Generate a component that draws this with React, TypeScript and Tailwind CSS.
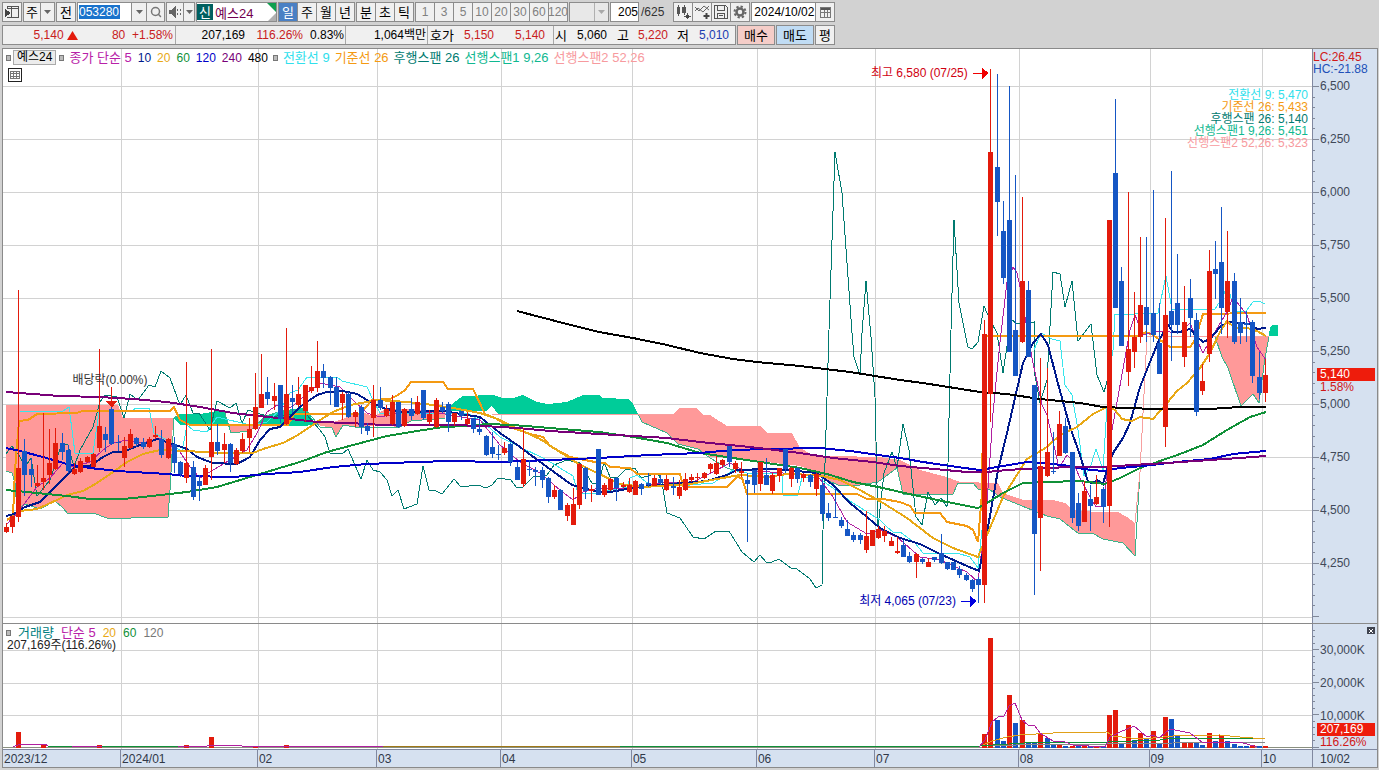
import type { ReactNode } from "react";
import { Search } from "lucide-react";

type Candle = [x: number, high: number, top: number, bottom: number, low: number, up: 0 | 1];
type Bar = [x: number, height: number, up: 0 | 1];

const RED = "#e31b0c";
const BLUE = "#1556c4";

// Plot coordinates: 53 units per 250 won, 6,500 sits on y = 86.
const candles: Candle[] = [
	[6, 523, 527, 532, 533, 1], [12, 516, 516, 527, 533, 1], [18, 290, 468, 517, 522, 1], [24, 439, 451, 475, 496, 0],
	[31, 458, 469, 475, 487, 0], [37, 465, 483, 486, 487, 1], [43, 413, 478, 482, 490, 1], [49, 429, 463, 475, 484, 1],
	[55, 428, 443, 469, 470, 1], [62, 433, 443, 452, 460, 0], [68, 445, 450, 471, 473, 0], [74, 463, 469, 474, 475, 1],
	[80, 458, 461, 472, 473, 1], [87, 456, 457, 462, 463, 1], [93, 453, 454, 467, 467, 1], [99, 349, 426, 448, 452, 1],
	[105, 427, 434, 440, 452, 0], [111, 407, 409, 444, 445, 0], [118, 435, 442, 443, 451, 0], [124, 437, 446, 458, 467, 1],
	[130, 429, 434, 448, 449, 1], [136, 437, 438, 444, 447, 0], [143, 438, 442, 447, 449, 0], [149, 437, 439, 447, 448, 1],
	[155, 426, 435, 437, 439, 1], [161, 430, 439, 455, 458, 0], [168, 438, 439, 458, 459, 1], [174, 437, 444, 463, 473, 0],
	[180, 461, 462, 474, 477, 0], [186, 362, 463, 478, 483, 1], [193, 461, 467, 497, 500, 0], [199, 475, 481, 486, 501, 0],
	[205, 465, 468, 485, 485, 1], [211, 349, 442, 457, 480, 1], [217, 424, 442, 451, 455, 0], [224, 433, 444, 450, 463, 1],
	[230, 443, 444, 463, 472, 0], [236, 448, 450, 464, 465, 1], [242, 433, 439, 451, 453, 1], [249, 418, 429, 438, 452, 1],
	[255, 373, 407, 429, 430, 1], [261, 354, 394, 408, 408, 1], [267, 377, 392, 399, 405, 0], [274, 383, 396, 401, 410, 1],
	[280, 385, 385, 419, 423, 0], [286, 328, 394, 424, 425, 1], [292, 385, 398, 402, 413, 0], [298, 377, 394, 405, 407, 1],
	[305, 385, 385, 411, 422, 1], [311, 366, 387, 391, 393, 1], [317, 341, 371, 388, 392, 1], [323, 364, 371, 378, 388, 0],
	[330, 376, 377, 388, 405, 0], [336, 377, 387, 407, 407, 0], [342, 392, 394, 403, 420, 1], [348, 392, 394, 417, 418, 0],
	[355, 410, 412, 417, 427, 1], [361, 405, 407, 427, 434, 0], [367, 423, 426, 431, 435, 0], [373, 385, 400, 418, 437, 1],
	[380, 387, 400, 408, 410, 0], [386, 405, 409, 416, 417, 1], [392, 395, 402, 424, 425, 1], [398, 402, 402, 427, 428, 0],
	[404, 408, 409, 426, 427, 1], [411, 398, 409, 416, 420, 0], [417, 396, 402, 414, 415, 1], [423, 390, 390, 418, 420, 0],
	[429, 410, 414, 422, 425, 1], [436, 398, 400, 427, 428, 1], [442, 402, 407, 411, 413, 0], [448, 402, 404, 422, 432, 0],
	[454, 413, 413, 422, 426, 1], [461, 411, 411, 416, 420, 0], [467, 412, 419, 424, 425, 1], [473, 418, 418, 429, 433, 0],
	[479, 418, 429, 432, 435, 0], [486, 435, 436, 455, 456, 0], [492, 432, 447, 454, 458, 0], [498, 445, 454, 455, 460, 0],
	[504, 442, 448, 453, 455, 1], [510, 443, 444, 462, 466, 0], [517, 462, 467, 480, 480, 0], [523, 428, 459, 484, 487, 1],
	[529, 460, 469, 470, 476, 0], [535, 467, 470, 472, 486, 0], [542, 467, 470, 480, 488, 0], [548, 477, 478, 497, 503, 0],
	[554, 485, 490, 497, 499, 1], [560, 489, 490, 510, 510, 0], [567, 503, 505, 516, 521, 1], [573, 488, 504, 525, 525, 1],
	[579, 463, 464, 505, 509, 1], [585, 467, 468, 491, 499, 0], [591, 485, 489, 491, 502, 1], [598, 449, 449, 495, 495, 0],
	[604, 483, 485, 495, 497, 1], [610, 478, 479, 490, 491, 1], [616, 477, 478, 488, 501, 0], [623, 482, 485, 487, 488, 1],
	[629, 478, 485, 492, 493, 1], [635, 480, 481, 495, 495, 1], [641, 483, 484, 489, 495, 0], [648, 473, 483, 485, 487, 0],
	[654, 475, 478, 486, 486, 1], [660, 475, 479, 483, 485, 0], [666, 475, 479, 490, 491, 1], [673, 477, 486, 488, 495, 0],
	[679, 480, 487, 496, 499, 1], [685, 473, 479, 490, 491, 1], [691, 474, 477, 480, 482, 1], [697, 473, 477, 478, 481, 1],
	[704, 472, 473, 478, 479, 1], [710, 463, 464, 469, 473, 1], [716, 456, 463, 474, 475, 1], [722, 459, 460, 465, 467, 1],
	[729, 446, 446, 462, 467, 0], [735, 461, 463, 469, 473, 1], [741, 462, 471, 473, 477, 1], [747, 473, 480, 484, 542, 0],
	[754, 470, 470, 485, 493, 0], [760, 462, 462, 484, 491, 1], [766, 458, 475, 485, 485, 0], [772, 473, 475, 491, 494, 1],
	[779, 468, 468, 476, 482, 1], [785, 449, 449, 469, 473, 0], [791, 467, 468, 479, 487, 1], [797, 467, 468, 479, 483, 0],
	[803, 473, 474, 478, 482, 1], [810, 474, 475, 482, 487, 0], [816, 473, 474, 489, 496, 1], [822, 477, 485, 514, 521, 0],
	[828, 503, 513, 518, 521, 0], [835, 488, 517, 518, 518, 0], [841, 517, 520, 526, 528, 0], [847, 520, 529, 536, 536, 0],
	[853, 532, 535, 540, 542, 0], [860, 533, 535, 540, 544, 0], [866, 511, 536, 550, 553, 1], [872, 530, 530, 546, 546, 1],
	[878, 526, 529, 538, 539, 1], [884, 526, 531, 536, 542, 1], [891, 537, 541, 546, 546, 1], [897, 537, 551, 553, 554, 1],
	[903, 540, 545, 557, 557, 0], [909, 552, 556, 562, 563, 0], [916, 553, 554, 562, 578, 1], [922, 558, 559, 562, 564, 0],
	[928, 558, 562, 567, 567, 1], [934, 557, 557, 560, 562, 0], [941, 534, 553, 563, 564, 0], [947, 562, 562, 569, 570, 0],
	[953, 562, 562, 570, 570, 0], [959, 566, 569, 575, 578, 0], [966, 573, 575, 580, 581, 0], [972, 579, 580, 589, 592, 0],
	[978, 577, 579, 585, 603, 0], [984, 320, 334, 585, 603, 1], [990, 69, 152, 394, 422, 1], [997, 74, 167, 202, 236, 0],
	[1003, 201, 231, 278, 284, 0], [1009, 86, 220, 352, 352, 0], [1015, 175, 330, 376, 376, 0], [1022, 197, 281, 342, 343, 1],
	[1028, 281, 290, 357, 357, 0], [1034, 385, 385, 534, 595, 0], [1040, 358, 466, 518, 571, 1], [1047, 368, 452, 476, 477, 1],
	[1053, 432, 471, 472, 474, 0], [1059, 411, 424, 456, 456, 1], [1065, 418, 426, 453, 454, 0], [1072, 452, 452, 518, 523, 0],
	[1078, 493, 503, 526, 531, 0], [1084, 481, 491, 522, 522, 1], [1090, 485, 499, 506, 531, 0], [1096, 475, 497, 504, 505, 1],
	[1103, 487, 489, 507, 523, 0], [1109, 220, 220, 506, 527, 1], [1115, 99, 173, 308, 308, 0], [1121, 267, 281, 346, 346, 0],
	[1128, 192, 349, 372, 386, 1], [1134, 292, 337, 352, 368, 1], [1140, 237, 305, 337, 343, 1], [1146, 237, 307, 325, 342, 0],
	[1153, 190, 313, 335, 342, 0], [1159, 303, 343, 374, 374, 0], [1165, 218, 315, 427, 447, 1], [1171, 171, 311, 325, 361, 0],
	[1177, 254, 303, 325, 334, 0], [1184, 286, 322, 357, 367, 1], [1190, 279, 298, 318, 337, 0], [1196, 313, 320, 412, 416, 0],
	[1202, 364, 381, 391, 395, 1], [1209, 250, 271, 354, 362, 1], [1215, 241, 269, 274, 299, 0], [1221, 207, 262, 308, 334, 0],
	[1227, 231, 281, 312, 338, 1], [1234, 273, 281, 342, 344, 0], [1240, 298, 322, 333, 344, 0], [1246, 311, 323, 325, 342, 0],
	[1252, 320, 322, 376, 383, 0], [1259, 352, 377, 393, 399, 0], [1265, 359, 375, 393, 402, 1],
];

const volumes: Bar[] = [
	[18, 15, 1], [43, 3, 1], [99, 2, 1], [186, 2, 1], [211, 10, 1], [255, 1, 1], [286, 2, 1],
	[984, 13, 1], [990, 109, 1], [997, 27, 0], [1003, 6, 0], [1009, 52, 1], [1015, 24, 0], [1022, 27, 1], [1028, 4, 0],
	[1034, 4, 0], [1040, 13, 1], [1047, 9, 0], [1053, 2, 0], [1059, 2, 1], [1065, 1, 0], [1072, 1, 1], [1078, 2, 0],
	[1084, 1, 1], [1090, 1, 0], [1096, 1, 1], [1103, 1, 0], [1109, 32, 1], [1115, 37, 1], [1121, 4, 0], [1128, 22, 1],
	[1134, 7, 0], [1140, 14, 1], [1146, 8, 0], [1153, 16, 1], [1159, 4, 0], [1165, 30, 1], [1171, 28, 0], [1177, 11, 0],
	[1184, 4, 1], [1190, 4, 1], [1196, 4, 0], [1202, 2, 0], [1209, 14, 1], [1215, 6, 0], [1221, 12, 1], [1227, 6, 0],
	[1234, 3, 0], [1240, 1, 0], [1246, 1, 0], [1252, 2, 1], [1259, 1, 0], [1265, 1, 1],
];

const clouds = [
	{ fill: "#ff9999", points: "6,405 118,405 123,418 173,418 170,490 168,517 163,518 140,517 123,519 107,518 93,513 68,514 63,508 55,501 40,509 25,504 17,510 15,483 12,473 6,471" },
	{ fill: "#00cc99", points: "174,418 180,414 200,414 224,410 229,425 180,425" },
	{ fill: "#ff9999", points: "229,425 231,433 250,431 256,425" },
	{ fill: "#00cc99", points: "258,425 266,416 285,410 303,408 308,412 316,425 300,426" },
	{ fill: "#ff9999", points: "313,424 333,422 345,418 360,412 375,416 385,409 445,410 445,418 425,420 411,421 400,427 375,425 361,428 343,425 336,437 332,428" },
	{ fill: "#00cc99", points: "445,411 453,403 463,396 493,395 502,398 513,398 523,395 537,402 548,404 557,403 567,402 583,395 599,395 603,398 628,399 633,404 638,414 498,414 492,406 486,411" },
	{ fill: "#ff9999", points: "638,414 673,414 680,408 697,408 703,415 710,415 727,426 760,426 767,433 792,433 800,448 813,455 833,456 880,457 900,460 920,470 947,477 960,482 998,483 1003,493 1023,500 1053,500 1065,503 1073,510 1097,512 1118,512 1127,517 1135,523 1135,556 1123,543 1103,539 1092,533 1078,533 1070,527 1060,519 1047,516 1027,508 1000,497 990,490 978,489 973,483 958,483 953,494 903,494 897,468 878,482 860,485 840,486 827,480 817,473 800,466 733,458 710,457 698,449 678,444 667,433 642,422" },
	{ fill: "#ff9999", points: "1215,337 1269,337 1265,358 1259,403 1253,394 1241,406 1228,368 1222,357" },
	{ fill: "#00cc99", points: "1269,336 1270,327 1273,325 1278,325 1278,336" },
];

const priceLines = [
	{ color: "#3cb38a", width: 1, points: "6,471 12,473 15,483 17,510 25,504 40,509 55,501 63,508 68,514 93,513 107,518 123,519 140,517 163,518 168,517 170,490 174,418 180,414" },
	{ color: "#3cb38a", width: 1, points: "224,410 231,433 250,431 256,425 266,416 285,410 308,412 320,427 332,428 336,437 343,425 361,428 400,427 411,421 445,418" },
	{ color: "#3cb38a", width: 1, points: "638,414 642,422 667,433 678,444 698,449 710,458 727,468 740,472" },
	{ color: "#3cb38a", width: 1, points: "817,473 827,480 840,486 860,485 878,482 897,468 903,494 953,494 958,483 973,483 978,489 990,490 1000,497 1027,508 1047,516 1060,519 1070,527 1078,533 1092,533 1103,539 1123,543 1135,556 1140,472" },
	{ color: "#f7a0a0", width: 1, points: "492,414 673,414" },
	{ color: "#f7a0a0", width: 1, points: "1135,523 1140,472 1147,336 1269,336" },
	{ color: "#3cb38a", width: 1, points: "1215,337 1222,357 1228,368 1241,406 1253,394 1259,403 1265,358 1269,337" },
	// lagging span
	{ color: "#007a70", width: 1, points: "6,454 12,446 20,457 25,467 31,458 37,496 50,480 62,443 68,445 74,467 80,450 93,427 100,402 105,395 117,397 124,418 130,394 138,400 149,385 155,387 161,371 170,378 180,405 186,395 193,413 199,413 210,430 217,401 230,408 236,403 242,423 248,410 257,413 270,417 300,413 307,415 320,430 325,437 330,453 342,454 348,449 361,479 367,460 373,470 380,472 387,480 392,496 398,490 404,509 417,504 423,466 429,490 436,491 442,494 454,479 461,487 478,485 486,488 492,485 498,478 511,480 517,488 523,487 533,477 547,475 554,465 567,460 580,463 592,483 599,483 604,462 610,477 617,478 625,470 635,468 641,478 658,473 662,483 667,513 680,518 693,537 704,539 716,531 729,531 742,552 754,562 760,555 766,562 772,562 779,559 791,568 797,569 810,579 816,588 822,585 823,530 829,330 835,152 842,193 852,333 854,357 860,375 862,333 866,281 871,337 875,397 878,527 884,473 892,452 897,468 903,424 909,450 916,517 922,525 928,492 935,505 941,498 947,507 951,330 954,220 959,303 966,338 968,347 972,349 978,342 984,306 990,320 997,333 1003,373 1011,319 1017,324 1034,322 1034,370 1040,403 1047,380 1053,272 1060,274 1065,307 1072,281 1078,341 1091,324 1097,375 1104,392 1108,378" },
	// conversion line
	{ color: "#37e6ec", width: 1, points: "20,411 63,411 69,407 75,453 93,453 99,412 133,411 135,408 149,408 154,433 167,440 182,452 187,425 193,430 207,432 217,417 250,425 267,422 280,410 290,393 298,390 307,377 337,377 342,381 367,387 373,400 380,413 443,413 467,413 483,422 500,437 520,447 547,460 573,476 578,493 597,493 627,487 630,478 637,475 650,485 690,485 713,483 723,477 733,470 747,473 782,474 783,495 798,495 802,477 817,477 833,488 853,503 880,520 887,527 893,532 900,532 915,543 923,553 957,553 970,557 978,568 982,530 984,480 986,336" },
	{ color: "#37e6ec", width: 1, points: "1034,350 1036,345 1041,333 1052,339 1060,341 1065,385 1072,395 1078,430 1084,476 1090,468 1096,449 1103,470 1109,375 1113,350 1115,314 1134,314 1158,313 1166,276 1172,309 1215,309 1222,298 1228,285 1234,311 1246,311 1253,302 1259,301 1265,304" },
	// base line
	{ color: "#f49a12", width: 2, points: "7,520 13,516 15,470 19,421 28,420 37,414 77,413 82,411 170,411 174,407 180,420 190,425 288,425 294,414 360,414 372,400 390,399 398,395 405,390 411,382 443,382 448,389 473,389 485,414 495,418 510,427 530,434 543,437 550,446 570,457 585,460 600,463 605,463 610,467 630,468 637,474 680,474 683,486 690,487 727,487 730,484 737,477 742,478 747,494 857,494 867,499 883,499 900,502 910,506 915,513 940,513 947,522 967,526 973,530 978,542 982,493 984,336 1140,336 1146,332 1153,335 1170,347 1190,347 1195,340 1203,314 1257,313 1266,313" },
	// simple moving averages 5 / 10 / 20 / 60 / 120 / 240 / 480
	{ color: "#b020a0", width: 1, points: "6,525 20,510 27,500 37,487 50,478 63,463 73,467 90,462 103,450 113,443 127,440 143,443 160,438 180,452 190,467 200,478 213,470 230,460 247,450 257,433 267,412 277,405 290,408 300,400 307,393 320,383 340,387 353,400 367,413 380,417 400,413 433,412 480,420 500,445 520,462 540,473 560,490 573,500 583,492 599,488 633,489 660,483 693,482 713,472 730,463 743,470 783,473 817,475 833,497 847,522 867,534 880,530 897,537 920,557 940,560 967,572 978,582 987,503 993,413 1000,342 1007,282 1013,267 1017,273 1020,287 1032,358 1042,405 1047,415 1059,468 1067,455 1072,460 1080,478 1090,497 1096,507 1103,506 1112,430 1130,330 1135,315 1143,335 1160,331 1180,333 1190,323 1197,340 1203,353 1213,335 1227,312 1233,297 1247,315 1257,347 1266,360" },
	{ color: "#001a8c", width: 2, points: "6,516 14,514 25,507 40,502 50,492 67,475 75,467 90,466 103,457 113,452 123,452 137,446 147,443 157,439 167,442 187,449 197,457 213,463 237,464 250,457 260,440 270,429 280,427 290,417 300,407 317,395 327,392 343,391 357,394 367,400 383,408 400,412 443,411 467,415 480,417 500,433 520,447 547,467 572,485 599,492 610,492 633,488 660,485 683,483 707,481 727,475 737,470 767,469 787,470 817,473 833,485 850,503 867,517 880,528 900,538 920,544 940,554 967,566 979,571 987,533 998,470 1007,433 1023,363 1033,343 1041,334 1048,345 1057,380 1070,427 1080,455 1088,482 1093,483 1097,480 1103,484 1106,473 1113,453 1123,438 1130,423 1140,387 1150,362 1159,340 1168,325 1173,332 1180,332 1190,329 1197,337 1203,342 1210,339 1220,327 1228,322 1240,323 1250,324 1257,329 1266,328" },
	{ color: "#e8a815", width: 2, points: "20,511 37,509 57,500 67,495 83,491 97,483 113,472 127,462 143,454 160,450 187,451 217,453 253,453 263,449 283,443 298,435 317,422 333,412 350,405 367,402 377,400 407,402 433,405 453,408 480,413 500,420 520,430 540,439 560,452 577,463 599,474 610,479 620,484 643,487 690,484 717,479 740,475 767,477 787,474 817,475 840,480 860,490 883,503 907,518 933,538 953,548 978,557 987,535 1003,497 1027,459 1047,447 1060,435 1077,427 1093,414 1107,407 1115,410 1122,419 1132,421 1140,417 1153,419 1167,403 1177,391 1187,383 1200,368 1210,353 1220,332 1227,321 1235,328 1247,328 1257,331 1266,336" },
	{ color: "#109038", width: 2, points: "6,490 27,492 67,496 90,499 123,499 143,497 187,492 217,487 250,477 283,467 300,462 327,452 357,444 387,436 417,431 443,427 467,426 487,424 513,425 550,428 599,432 633,437 667,443 700,453 733,458 767,463 800,468 827,474 853,482 883,488 900,492 923,497 957,504 978,508 987,503 1003,493 1023,483 1047,482 1080,481 1105,484 1120,478 1140,468 1160,461 1180,454 1203,445 1227,430 1250,417 1266,412" },
	{ color: "#0000c8", width: 2, points: "6,448 20,451 43,457 67,464 90,468 117,471 167,474 187,476 233,477 267,474 300,472 333,467 367,464 417,462 450,461 500,462 550,460 599,458 650,455 700,453 733,450 767,449 820,448 850,451 900,458 923,462 957,467 980,470 997,467 1027,462 1053,464 1070,466 1083,469 1103,471 1120,468 1143,466 1177,462 1210,459 1233,454 1266,451" },
	{ color: "#780078", width: 2, points: "6,392 33,394 60,396 100,397 133,399 167,402 200,407 233,413 267,417 300,420 317,422 350,423 383,425 450,425 483,426 517,428 550,431 599,434 633,436 667,438 700,442 750,447 800,453 833,458 873,462 900,466 923,468 967,472 987,472 1007,470 1040,468 1080,467 1103,467 1133,465 1167,463 1210,460 1240,458 1266,456" },
	{ color: "#000000", width: 2, points: "517,311 540,317 567,324 599,332 633,338 667,345 700,353 733,359 757,362 800,366 850,372 900,380 923,383 980,392 1007,394 1040,399 1080,403 1103,407 1127,408 1157,409 1210,409 1240,407 1266,407" },
];

const volumeLines = [
	{ color: "#888888", points: "993,746 1040,744 1107,744 1173,743 1265,742" },
	{ color: "#b020a0", points: "13,747 20,744 45,744 48,746 207,746 214,745 238,745 242,746 383,746" },
	{ color: "#109038", points: "48,746 72,746" },
	{ color: "#109038", points: "102,746 178,746" },
	{ color: "#a07818", points: "383,746 620,746" },
	{ color: "#109038", points: "620,746 980,746 993,745 1040,742 1107,742 1160,740 1173,738 1265,738" },
	{ color: "#e0a018", points: "983,745 992,741 1007,737 1020,735 1053,733 1107,732 1113,736 1140,739 1153,738 1173,736 1220,735 1240,737 1265,739" },
	{ color: "#b020a0", points: "979,747 985,740 992,722 998,717 1004,716 1009,706 1015,703 1022,720 1028,725 1035,726 1040,733 1053,741 1065,742 1073,745 1105,747 1110,737 1120,732 1134,726 1147,737 1153,735 1159,738 1170,729 1190,733 1202,742 1220,742 1240,742 1257,747" },
];

const months = [
	{ label: "2023/12", x: 3 },
	{ label: "2024/01", x: 121 },
	{ label: "02", x: 258 },
	{ label: "03", x: 377 },
	{ label: "04", x: 501 },
	{ label: "05", x: 632 },
	{ label: "06", x: 757 },
	{ label: "07", x: 875 },
	{ label: "08", x: 1019 },
	{ label: "09", x: 1150 },
	{ label: "10", x: 1262 },
];
const PLOT_END = 1312;

const priceTicks = ["6,500", "6,250", "6,000", "5,750", "5,500", "5,250", "5,000", "4,750", "4,500", "4,250"];
const minutes = ["1", "3", "5", "10", "20", "30", "60", "120"];

const box = "h-[20px] border border-[#8c8c8c] bg-[#f0f0f0] flex items-center justify-center";

function ToolButton({ children, className = "", label }: { children: ReactNode; className?: string; label?: string }) {
	return (
		<button type="button" aria-label={label} className={`${box} ${className}`}>
			{children}
		</button>
	);
}

function Caret({ color = "#666" }: { color?: string }) {
	return (
		<svg width="7" height="4" viewBox="0 0 7 4">
			<path d="M0 0h7L3.5 4z" fill={color} />
		</svg>
	);
}

function Toolbar() {
	return (
		<div className="flex items-center gap-px pl-[2px] text-[13px]">
			<ToolButton className="w-[20px]" label="패널">
				<svg width="14" height="14" viewBox="0 0 14 14" shapeRendering="crispEdges">
					<path d="M2 1.500h11v11H2zM6.500 1v11M2 3.500h11" fill="none" stroke="#555" />
					<rect x="0" y="4" width="6" height="8" fill="#f0f0f0" />
					<path d="M0 4l6 4-6 4z" fill="#444" />
				</svg>
			</ToolButton>
			<div className="flex -space-x-px">
				<ToolButton className="w-[18px]">주</ToolButton>
				<ToolButton className="w-[15px]" label="주기 선택">
					<Caret />
				</ToolButton>
			</div>
			<ToolButton className="w-[20px]">전</ToolButton>
			<div className="flex -space-x-px">
				<div className="flex h-[20px] w-[55px] items-center border border-[#8c8c8c] bg-white">
					<input
						aria-label="종목코드"
						defaultValue="053280"
						className="ml-px h-[14px] w-[41px] bg-[#1a73cc] text-[12px] text-white outline-none"
					/>
				</div>
				<ToolButton className="w-[16px]" label="종목 목록">
					<Caret />
				</ToolButton>
				<ToolButton className="w-[19px]" label="종목 검색">
					<Search size={12} color="#777" strokeWidth={3} />
				</ToolButton>
			</div>
			<div className="flex -space-x-px">
				<ToolButton className="w-[18px]" label="소리">
					<svg width="13" height="12" viewBox="0 0 13 12" shapeRendering="crispEdges">
						<path d="M0 4h3V8H0zM3 3l4-3v12L3 9z" fill="#666" />
						<path d="M8 3h1v2H8zM8 7h1v2H8zM11 3h1v2h-1zM11 7h1v2h-1z" fill="#666" />
					</svg>
				</ToolButton>
				<ToolButton className="w-[12px]" label="소리 설정">
					<Caret />
				</ToolButton>
			</div>
			<div className="relative flex h-[20px] w-[81px] items-center border border-[#8c8c8c] bg-white">
				<span className="flex h-[16px] w-[16px] items-center justify-center bg-[#006060] text-white">신</span>
				<input aria-label="종목명" defaultValue="예스24" className="ml-[2px] w-[48px] text-[#700050] outline-none" />
				<svg className="absolute right-0 top-0" width="9" height="18" viewBox="0 0 9 18">
					<path d="M0 0h9v9z" fill="#10a050" />
					<path d="M9 10v8H1z" fill="#b0b0b0" />
				</svg>
			</div>
			<div className="flex -space-x-px">
				<button type="button" className="flex h-[20px] w-[20px] items-center justify-center border border-[#8c8c8c] bg-[#4a80c4] text-white">
					일
				</button>
				<ToolButton className="w-[20px]">주</ToolButton>
				<ToolButton className="w-[20px]">월</ToolButton>
				<ToolButton className="w-[20px]">년</ToolButton>
			</div>
			<div className="flex -space-x-px">
				<ToolButton className="w-[20px]">분</ToolButton>
				<ToolButton className="w-[20px]">초</ToolButton>
				<ToolButton className="w-[20px]">틱</ToolButton>
			</div>
			<div className="flex -space-x-px text-[12px] text-[#808080]">
				{minutes.map((m) => (
					<ToolButton key={m} className="w-[20px]">
						{m}
					</ToolButton>
				))}
			</div>
			<div className="relative h-[20px] w-[40px]">
				<select aria-label="분 선택" className="h-[20px] w-full appearance-none border border-[#8c8c8c] bg-[#e8e8e8]" />
				<span className="pointer-events-none absolute right-[1px] top-[1px] flex h-[18px] w-[14px] items-center justify-center border-l border-[#b0b0b0]">
					<Caret color="#a8a8a8" />
				</span>
			</div>
			<label className="flex items-center gap-[2px] text-[12px] text-[#333]">
				<input
					aria-label="표시 개수"
					defaultValue="205"
					className="h-[20px] w-[29px] border border-[#8c8c8c] bg-white text-right text-black outline-none"
				/>
				/625
			</label>
			<div className="ml-[8px] flex -space-x-px">
				<ToolButton className="w-[20px]" label="차트 추가">
					<svg width="15" height="14" viewBox="0 0 15 14" shapeRendering="crispEdges">
						<path d="M1 2h3v7H1zM6 2h4v6H6z" fill="#555" />
						<path d="M2.500 0v11M8.500 0v10M11.500 8v6M8 11.500h7" stroke="#555" />
						<path d="M10 10h3v3h-3z" fill="#444" />
					</svg>
				</ToolButton>
				<ToolButton className="w-[20px]" label="지표 추가">
					<svg width="15" height="14" viewBox="0 0 15 14">
						<path d="M0 2l4 4 5-5 5 4M0 6l3-3 5 4 6-6" fill="none" stroke="#666" />
						<path d="M11.500 8v6M8.500 11h6" stroke="#444" strokeWidth="2" />
					</svg>
				</ToolButton>
				<ToolButton className="w-[20px]" label="저장">
					<svg width="14" height="14" viewBox="0 0 14 14" fill="none" stroke="#555" shapeRendering="crispEdges">
						<path d="M.500 .500h11l2 2v11H.500zM3.500 1v4h7V1M3.500 13V8.500h7V13M5 10.500h4" />
					</svg>
				</ToolButton>
				<ToolButton className="w-[20px]" label="설정">
					<svg width="14" height="14" viewBox="0 0 14 14" fill="none" stroke="#666">
						<circle cx="7" cy="7" r="5.500" strokeWidth="2" strokeDasharray="2.300 2" />
						<circle cx="7" cy="7" r="3.500" strokeWidth="2.500" />
					</svg>
				</ToolButton>
			</div>
			<div className="flex -space-x-px">
				<input
					aria-label="조회일"
					defaultValue="2024/10/02"
					className="h-[20px] w-[65px] border border-[#8c8c8c] bg-white pl-[2px] text-[12px] text-black outline-none"
				/>
				<ToolButton className="w-[20px]" label="달력">
					<svg width="11" height="11" viewBox="0 0 11 11" shapeRendering="crispEdges">
						<path d="M0 0h11v3H0z" fill="#555" />
						<path d="M.500 .500h10v10H.500zM.500 5.500h10M4.500 3v7M7.500 3v7" fill="none" stroke="#777" />
					</svg>
				</ToolButton>
			</div>
		</div>
	);
}

function QuoteBar() {
	const cell = "flex items-center justify-end h-full";
	return (
		<div className="flex items-center gap-px pl-[2px]">
			<div className="flex h-[20px] w-[734px] items-center border border-[#8c8c8c] bg-[#f0f0f0]">
				<div className={`${cell} w-[173px] border-r border-[#a8a8a8] pr-[2px] text-[#c8201c]`}>
					<span className="flex w-[75px] items-center justify-end gap-[3px]">
						5,140
						<svg width="11" height="9" viewBox="0 0 11 9">
							<path d="M5.500 0L11 9H0z" fill={RED} />
						</svg>
					</span>
					<span className="w-[48px] text-right">80</span>
					<span className="w-[48px] text-right">+1.58%</span>
				</div>
				<div className={`${cell} w-[170px] border-r border-[#a8a8a8] pr-[1px]`}>
					<span>207,169</span>
					<span className="w-[58px] text-right text-[#c8201c]">116.26%</span>
					<span className="w-[41px] text-right">0.83%</span>
				</div>
				<div className={`${cell} w-[82px] border-r border-[#a8a8a8] pr-[1px]`}>1,064백만</div>
				<div className={`${cell} w-[126px] border-r border-[#a8a8a8] pr-[8px]`}>
					<span className="text-[13px]">호가</span>
					<span className="w-[40px] text-right text-[#c8201c]">5,150</span>
					<span className="w-[51px] text-right text-[#c8201c]">5,140</span>
				</div>
				<div className={`${cell} w-[181px] pr-[6px]`}>
					<span className="text-[13px]">시</span>
					<span className="w-[40px] text-right">5,060</span>
					<span className="w-[22px] text-right text-[13px]">고</span>
					<span className="w-[39px] text-right text-[#c8201c]">5,220</span>
					<span className="w-[21px] text-right text-[13px]">저</span>
					<span className="w-[40px] text-right text-[#1a3cb0]">5,010</span>
				</div>
			</div>
			<button type="button" className="h-[20px] w-[38px] border border-[#8c8c8c] bg-[#f5cdc8] text-[13px]">
				매수
			</button>
			<button type="button" className="h-[20px] w-[38px] border border-[#8c8c8c] bg-[#c0dcf4] text-[13px]">
				매도
			</button>
			<ToolButton className="w-[20px] text-[13px]">평</ToolButton>
		</div>
	);
}

function Marker() {
	return <span className="h-[6px] w-[5px] border border-[#777] bg-[#bbb]" />;
}

function Line({ points, color, width = 1 }: { points: string; color: string; width?: number }) {
	return <polyline points={points} fill="none" stroke={color} strokeWidth={width} />;
}

function PricePlot() {
	return (
		<svg className="block h-[574px] w-full" viewBox="3 49 1309 574" preserveAspectRatio="none" shapeRendering="crispEdges">
			{[86, 139, 192, 245, 298, 351, 404, 457, 510, 563, 617].map((y) => (
				<rect key={y} x="3" y={y} width="1309" height="1" fill="#d2d2d2" />
			))}
			{months.slice(1).map((m) => (
				<rect key={m.x} x={m.x} y="49" width="1" height="574" fill="#d2d2d2" />
			))}
			{clouds.map((c) => (
				<polygon key={c.points} points={c.points} fill={c.fill} />
			))}
			{priceLines.map((l) => (
				<Line key={l.points} {...l} />
			))}
			{candles.map(([x, high, top, bottom, low, up]) => (
				<g key={x} fill={up ? RED : BLUE}>
					<rect x={x} y={high} width="1" height={low - high} />
					<rect x={x - 2} y={top} width="5" height={bottom - top} />
				</g>
			))}
			<path d="M111 387h1v14h5l-5 7-6-7h5z" fill={RED} />
			<path d="M973 73h9v-5l7 5-7 6v-5h-9z" fill="#f00000" />
			<path d="M961 601h9v-5l7 5-7 6v-5h-9z" fill="#0000e0" />
		</svg>
	);
}

function VolumePlot() {
	return (
		<svg className="block h-[125px] w-full" viewBox="3 624 1309 125" preserveAspectRatio="none" shapeRendering="crispEdges">
			{[650, 683, 715].map((y) => (
				<rect key={y} x="3" y={y} width="1309" height="1" fill="#d2d2d2" />
			))}
			{months.slice(1).map((m) => (
				<rect key={m.x} x={m.x} y="624" width="1" height="125" fill="#d2d2d2" />
			))}
			<rect x="3" y="747" width="1309" height="1" fill="#8a9080" />
			{volumes.map(([x, height, up]) => (
				<rect key={x} x={x - 2} y={747 - height} width="5" height={height + 1} fill={up ? RED : BLUE} />
			))}
			{volumeLines.map((l) => (
				<Line key={l.points} {...l} />
			))}
		</svg>
	);
}

function PriceAxis() {
	const ticks = Array.from({ length: 51 }, (_, i) => i);
	return (
		<div className="relative w-[65px] shrink-0 border-l border-[#8088a0] bg-[#d6e1f0]">
			<svg className="absolute left-0 top-0" width="6" height="574" viewBox="0 0 6 574" shapeRendering="crispEdges">
				{ticks.map((i) => (
					<rect key={i} x="0" y={37 + Math.round(i * 10.6)} width={i % 5 === 0 ? 6 : 2} height="1" fill="#808898" />
				))}
			</svg>
			<div className="absolute left-0 top-[2px] leading-[12px]">
				<div className="text-[#d01818]">LC:26.45</div>
				<div className="text-[#2050b8]">HC:-21.88</div>
			</div>
			<div className="flex flex-col pt-[10px] pl-[7px] text-[#404858]">
				{priceTicks.map((t) => (
					<div key={t} className="flex h-[53px] items-center">
						{t}
					</div>
				))}
			</div>
			<div className="absolute left-[4px] top-[319px] w-[58px] leading-[13px]">
				<div className="bg-[#ee1c0c] pl-[3px] text-white">5,140</div>
				<div className="pl-[3px] leading-[12px] text-[#d01818]">1.58%</div>
			</div>
		</div>
	);
}

function VolumeAxis() {
	const ticks = Array.from({ length: 19 }, (_, i) => i);
	return (
		<div className="relative w-[65px] shrink-0 border-l border-[#8088a0] bg-[#d6e1f0]">
			<svg className="absolute left-0 top-0" width="6" height="125" viewBox="0 0 6 125" shapeRendering="crispEdges">
				{ticks.map((i) => (
					<rect key={i} x="0" y={123 - Math.round(i * 6.5)} width={i % 5 === 0 ? 6 : 2} height="1" fill="#808898" />
				))}
			</svg>
			<button type="button" aria-label="닫기" className="absolute right-[2px] top-[3px] flex h-[7px] w-[8px] items-center justify-center bg-[#404450]">
				<svg width="4" height="4" viewBox="0 0 4 4">
					<path d="M0 0l4 4M4 0L0 4" stroke="#fff" />
				</svg>
			</button>
			<div className="flex flex-col pt-[9px] pl-[7px] text-[#404858]">
				{["30,000K", "20,000K", "10,000K"].map((t) => (
					<div key={t} className="flex h-[33px] items-center">
						{t}
					</div>
				))}
			</div>
			<div className="absolute left-[4px] top-[99px] w-[58px] leading-[13px]">
				<div className="bg-[#ee1c0c] pl-[3px] text-white">207,169</div>
				<div className="pl-[3px] leading-[12px] text-[#d01818]">116.26%</div>
			</div>
		</div>
	);
}

function PriceLegend() {
	return (
		<>
			<div className="absolute left-[3px] top-[1px] flex h-[15px] items-center whitespace-nowrap">
				<Marker />
				<span className="ml-[2px] mr-[3px] border border-[#aaa] bg-[#ececec] px-[3px] leading-[13px]">예스24</span>
				<Marker />
				<div className="ml-[5px] flex items-center gap-[6px]">
					<span className="text-[13px] text-[#b820a8]">종가 단순 5</span>
					<span className="text-[#001a8c]">10</span>
					<span className="text-[#e8a815]">20</span>
					<span className="text-[#109038]">60</span>
					<span className="text-[#0000c8]">120</span>
					<span className="text-[#780078]">240</span>
					<span className="text-black">480</span>
				</div>
				<span className="mx-[5px] flex">
					<Marker />
				</span>
				<div className="flex gap-[5px] text-[13px]">
					<span className="text-[#30e0ec]">전환선 9</span>
					<span className="text-[#f49a12]">기준선 26</span>
					<span className="text-[#007a70]">후행스팬 26</span>
					<span className="text-[#10b890]">선행스팬1 9,26</span>
					<span className="text-[#f79a9e]">선행스팬2 52,26</span>
				</div>
			</div>
			<button type="button" aria-label="데이터 표" className="absolute left-[5px] top-[19px]">
				<svg className="block" width="14" height="14" viewBox="0 0 14 14" shapeRendering="crispEdges">
					<path d="M.500 .500h13v13H.500z" fill="#fff" stroke="#222" />
					<path d="M2.500 3.500h9v7h-9zM2.500 5.500h9M2.500 8.500h9M5.500 3v8M8.500 3v8" fill="none" stroke="#777" />
				</svg>
			</button>
			<div className="absolute right-[4px] top-[40px] text-right leading-[12px]">
				<div className="text-[#30e0ec]">전환선 9: 5,470</div>
				<div className="text-[#f49a12]">기준선 26: 5,433</div>
				<div className="text-[#007a70]">후행스팬 26: 5,140</div>
				<div className="text-[#10b890]">선행스팬1 9,26: 5,451</div>
				<div className="text-[#f79a9e]">선행스팬2 52,26: 5,323</div>
			</div>
			<span className="absolute left-[5.300%] top-[324px] leading-[15px] text-[#333]">배당락(0.00%)</span>
			<span className="absolute right-[26.300%] top-[17px] leading-[15px] text-[#d00010]">최고 6,580 (07/25)</span>
			<span className="absolute right-[27.200%] top-[545px] leading-[15px] text-[#0000b0]">최저 4,065 (07/23)</span>
		</>
	);
}

function App() {
	return (
		<div className="flex min-h-screen flex-col bg-[#d2d2d2] pt-[2px] font-['Liberation_Sans','Noto_Sans_CJK_KR',sans-serif] text-[12px] leading-none text-black">
			<Toolbar />
			<div className="pt-[3px] pb-[3px]">
				<QuoteBar />
			</div>
			<main className="ml-[2px] mr-[1px] border border-[#8a8a8a] bg-white">
				<section className="flex border-b border-[#8a8a8a]">
					<div className="relative min-w-0 flex-1">
						<PricePlot />
						<PriceLegend />
					</div>
					<PriceAxis />
				</section>
				<section className="flex border-b border-[#8088a0]">
					<div className="relative min-w-0 flex-1">
						<VolumePlot />
						<div className="absolute left-[3px] top-[1px] flex h-[15px] items-center gap-[7px]">
							<Marker />
							<span className="text-[13px] text-[#008080]">거래량</span>
							<span className="text-[13px] text-[#b820a8]">단순 5</span>
							<span className="text-[#e8a815]">20</span>
							<span className="text-[#109038]">60</span>
							<span className="text-[#777]">120</span>
						</div>
						<span className="absolute left-[4px] top-[14px] leading-[15px] text-[#222]">207,169주(116.26%)</span>
					</div>
					<VolumeAxis />
				</section>
				<footer className="flex h-[17px] items-center bg-[#d6e1f0] text-[#303848]">
					<div className="flex h-full min-w-0 flex-1">
						{months.map((m, i) => (
							<div
								key={m.label}
								className={`flex min-w-0 basis-0 items-center pl-[1px] ${i > 0 ? "border-l border-[#8088a0]" : ""}`}
								style={{ flexGrow: (months[i + 1]?.x ?? PLOT_END) - m.x }}
							>
								{m.label}
							</div>
						))}
					</div>
					<div className="flex h-full w-[65px] shrink-0 items-center border-l border-[#8088a0] pl-[7px]">10/02</div>
				</footer>
			</main>
		</div>
	);
}

export default App;
